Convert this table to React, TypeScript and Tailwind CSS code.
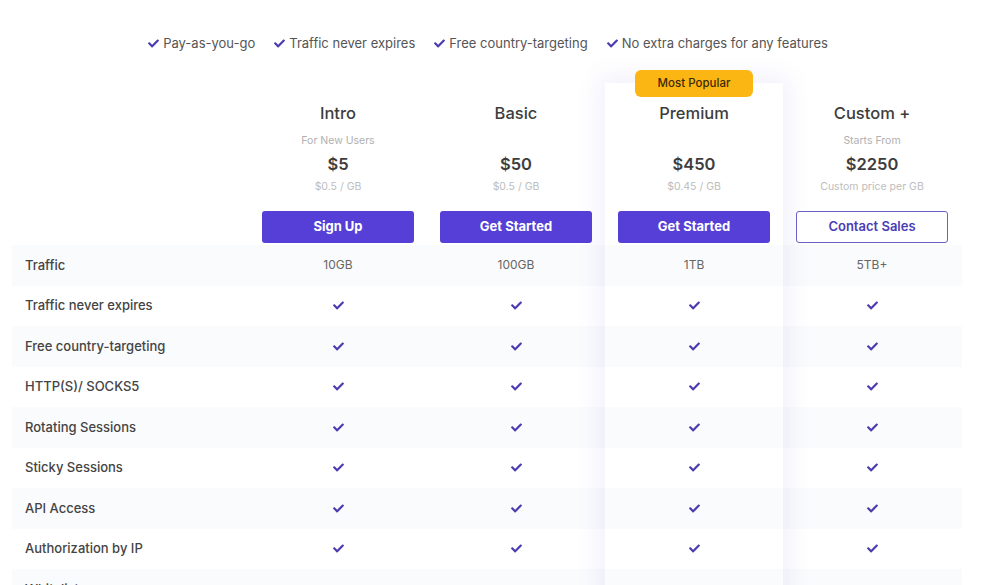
import { FaCheck } from "react-icons/fa";

type Plan = {
  name: string;
  note: string;
  price: string;
  perGb: string;
  cta: string;
  outline?: boolean;
  popular?: boolean;
};

const plans: Plan[] = [
  { name: "Intro", note: "For New Users", price: "$5", perGb: "$0.5 / GB", cta: "Sign Up" },
  { name: "Basic", note: "", price: "$50", perGb: "$0.5 / GB", cta: "Get Started" },
  { name: "Premium", note: "", price: "$450", perGb: "$0.45 / GB", cta: "Get Started", popular: true },
  { name: "Custom +", note: "Starts From", price: "$2250", perGb: "Custom price per GB", cta: "Contact Sales", outline: true },
];

const highlights = [
  "Pay-as-you-go",
  "Traffic never expires",
  "Free country-targeting",
  "No extra charges for any features",
];

const features: { label: string; values?: string[] }[] = [
  { label: "Traffic", values: ["10GB", "100GB", "1TB", "5TB+"] },
  { label: "Traffic never expires" },
  { label: "Free country-targeting" },
  { label: "HTTP(S)/ SOCKS5" },
  { label: "Rotating Sessions" },
  { label: "Sticky Sessions" },
  { label: "API Access" },
  { label: "Authorization by IP" },
  { label: "Whitelist" },
];

function Check() {
  return <FaCheck className="h-[11px] w-[11px] text-[#4b3bb0]" />;
}

export default function App() {
  return (
    <div
      className="h-[585px] w-[1000px] overflow-hidden bg-white text-[#3f3f46]"
      style={{ fontFamily: "Inter, 'Noto Sans', sans-serif" }}
    >
      <div className="flex h-[86px] items-start justify-center gap-[19px] pt-[34px] pr-[24px]">
        {highlights.map((h) => (
          <div key={h} className="flex items-center gap-[4px] text-[13px] text-[#555]">
            <FaCheck className="h-[11px] w-[11px] text-[#4b3bb0]" />
            <span>{h}</span>
          </div>
        ))}
      </div>

      <div className="relative ml-[12px] w-[950px]">
        {/* highlighted premium column */}
        <div className="absolute left-[593px] top-[-3px] h-[600px] w-[178px] bg-white shadow-[0_0_22px_6px_rgba(120,110,220,0.10)]" />

        <div className="relative flex">
          <div className="w-[237px]" />
          {plans.map((p) => (
            <div key={p.name} className="flex w-[178px] flex-col items-center">
              <div className="flex h-[16px] items-start">
                {p.popular && (
                  <div className="-mt-[16px] flex h-[27px] w-[118px] items-center justify-center rounded-md bg-[#fbb614] text-[11.5px] font-medium text-[#3b2a05]">
                    Most Popular
                  </div>
                )}
              </div>
              <div className="text-[16.5px] font-medium leading-[22px] text-[#3d3d3d]">{p.name}</div>
              <div className="mt-[10px] h-[14px] text-[10.5px] leading-[14px] text-[#b0b0b0]">{p.note}</div>
              <div className="mt-[6px] text-[16.5px] font-semibold leading-[20px] text-[#3d3d3d]">{p.price}</div>
              <div className="mt-[6px] text-[10.5px] leading-[14px] text-[#bdbdbd]">{p.perGb}</div>
              <button
                className={
                  p.outline
                    ? "mt-[17px] h-[32px] w-[152px] rounded-[3px] border border-[#6b5fc8] bg-white text-[13px] font-semibold text-[#4a3db5]"
                    : "mt-[17px] h-[32px] w-[152px] rounded-[3px] bg-[#553fd6] text-[13px] font-bold text-white"
                }
              >
                {p.cta}
              </button>
            </div>
          ))}
        </div>

        <div className="relative mt-[2px]">
          {features.map((f, i) => (
            <div
              key={f.label}
              className={`flex h-[40.5px] items-center ${i % 2 === 0 ? "bg-[#6470a0]/[0.03]" : ""}`}
            >
              <div className="w-[237px] pl-[13px] text-[13px] font-medium text-[#444]">{f.label}</div>
              {plans.map((p, j) => (
                <div key={p.name} className="flex w-[178px] justify-center text-[12px] text-[#666]">
                  {f.values ? f.values[j] : <Check />}
                </div>
              ))}
            </div>
          ))}
        </div>
      </div>
    </div>
  );
}
